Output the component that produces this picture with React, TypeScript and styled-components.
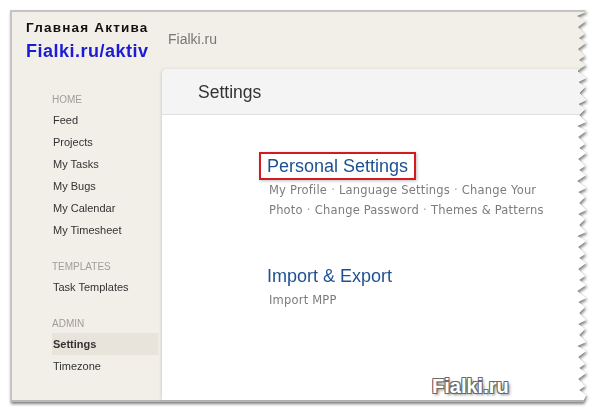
import React from 'react'
import styled, { createGlobalStyle } from 'styled-components'

const GlobalStyle = createGlobalStyle`
    html, body {
        margin: 0;
        padding: 0;
        background: #ffffff;
        font-family: 'Liberation Sans', Arial, sans-serif;
    }
`

const FRAME_W = 576
const FRAME_H = 392

// torn right edge of the screenshot
const tornEdge = () => {
    const pts: string[] = [`0px 0px`, `${FRAME_W - 1}px 0px`]
    let y = 2
    let i = 0
    while (y < FRAME_H - 4) {
        const out = i % 2 === 0
        const jitter = (i * 37) % 5
        const x = out ? FRAME_W - (jitter % 2) : FRAME_W - 7 - (jitter % 3)
        pts.push(`${x}px ${y}px`)
        y += 4 + ((i * 13) % 4)
        i++
    }
    pts.push(`${FRAME_W - 3}px ${FRAME_H}px`, `0px ${FRAME_H}px`)
    return `polygon(${pts.join(', ')})`
}

const Page = styled.div`
    position: relative;
    width: 608px;
    height: 414px;
    overflow: hidden;
`
const Shadow = styled.div`
    padding: 10px 0 0 10px;
    filter: drop-shadow(1.5px 2px 1.5px rgba(0, 0, 0, 0.5));
`
const Frame = styled.div`
    box-sizing: border-box;
    width: ${FRAME_W}px;
    height: ${FRAME_H}px;
    clip-path: ${tornEdge()};
    background: #f2eee8;
    border-top: 2px solid #c4c4c4;
    border-left: 2px solid #c4c4c4;
    border-bottom: 2px solid #b8b8b8;
    display: grid;
    grid-template-columns: 150px 1fr;
    grid-template-rows: 57px 1fr;
`
const Logo = styled.div`
    padding: 7px 0 0 14px;
`
const LogoTitle = styled.div`
    font-size: 13.5px;
    line-height: 17px;
    font-weight: bold;
    letter-spacing: 1.2px;
    color: #111;
`
const LogoLink = styled.div`
    margin-top: 4px;
    font-size: 18px;
    line-height: 22px;
    font-weight: bold;
    letter-spacing: 0.5px;
    color: #1b1bd4;
`
const TopBar = styled.div`
    padding: 18px 0 0 6px;
    font-size: 14px;
    line-height: 18px;
    color: #777;
`
const Sidebar = styled.nav`
    padding: 22px 4px 0 40px;
`
const Group = styled.div`
    & + & {
        margin-top: 17px;
    }
`
const GroupLabel = styled.div`
    font-size: 10px;
    line-height: 18px;
    color: #a09c98;
    text-transform: uppercase;
`
const NavItem = styled.div<{ $active?: boolean }>`
    height: 22px;
    line-height: 22px;
    font-size: 11px;
    color: #333;
    font-weight: ${p => (p.$active ? 'bold' : 'normal')};
    background: ${p => (p.$active ? '#e8e3db' : 'transparent')};
    padding-left: 1px;
`
const Panel = styled.main`
    background: #fff;
    border-top-left-radius: 5px;
    box-shadow: -1px 0 3px rgba(0, 0, 0, 0.12);
    display: flex;
    flex-direction: column;
`
const PanelHeader = styled.div`
    height: 45px;
    background: #f4f4f4;
    border-bottom: 1px solid #e0e0e0;
    border-top-left-radius: 5px;
    padding-left: 36px;
    font-size: 17.5px;
    line-height: 47px;
    color: #333;
`
const PanelBody = styled.div`
    padding: 37px 0 0 105px;
`
const Section = styled.section`
    & + & {
        margin-top: 42px;
    }
`
const Heading = styled.div<{ $marked?: boolean }>`
    display: inline-block;
    font-size: 18px;
    line-height: 24px;
    color: #1e5190;
    margin-left: -8px;
    padding: 0 6px;
    border: 2px solid ${p => (p.$marked ? '#d11a22' : 'transparent')};
    box-shadow: ${p => (p.$marked ? '1px 1px 3px rgba(0,0,0,0.25)' : 'none')};
`
const Links = styled.div`
    width: 290px;
    margin-left: 2px;
    font-family: 'DejaVu Sans', Verdana, sans-serif;
    font-size: 11.5px;
    line-height: 20px;
    color: #7c7c7c;
    letter-spacing: 0.2px;
`
const Dot = styled.span`
    color: #9a9a9a;
    margin: 0 4px;
`
const Watermark = styled.div`
    position: absolute;
    left: 432px;
    top: 375px;
    font-size: 20px;
    font-weight: bold;
    color: #fff;
    text-shadow: -1px -1px 0 #6a6a6a, 1px -1px 0 #6a6a6a, -1px 1px 0 #6a6a6a, 1px 1px 0 #6a6a6a,
        2px 2px 3px rgba(0, 0, 0, 0.5);
`

const nav = [
    { label: 'Home', items: ['Feed', 'Projects', 'My Tasks', 'My Bugs', 'My Calendar', 'My Timesheet'] },
    { label: 'Templates', items: ['Task Templates'] },
    { label: 'Admin', items: ['Settings', 'Timezone'] },
]

const personal = ['My Profile', 'Language Settings', 'Change Your Photo', 'Change Password', 'Themes & Patterns']

const App = () => (
    <Page>
        <GlobalStyle />
        <Shadow>
            <Frame>
                <Logo>
                    <LogoTitle>{'Главная Актива'}</LogoTitle>
                    <LogoLink>{'Fialki.ru/aktiv'}</LogoLink>
                </Logo>
                <TopBar>{'Fialki.ru'}</TopBar>
                <Sidebar>
                    {nav.map(g => (
                        <Group key={g.label}>
                            <GroupLabel>{g.label}</GroupLabel>
                            {g.items.map(it => (
                                <NavItem key={it} $active={it === 'Settings'}>{it}</NavItem>
                            ))}
                        </Group>
                    ))}
                </Sidebar>
                <Panel>
                    <PanelHeader>{'Settings'}</PanelHeader>
                    <PanelBody>
                        <Section>
                            <Heading $marked>{'Personal Settings'}</Heading>
                            <Links>
                                {personal.map((l, i) => (
                                    <React.Fragment key={l}>
                                        {i > 0 && <Dot>{'·'}</Dot>}
                                        {l}
                                    </React.Fragment>
                                ))}
                            </Links>
                        </Section>
                        <Section>
                            <Heading>{'Import & Export'}</Heading>
                            <Links>{'Import MPP'}</Links>
                        </Section>
                    </PanelBody>
                </Panel>
            </Frame>
        </Shadow>
        <Watermark>{'Fialki.ru'}</Watermark>
    </Page>
)

export default App
